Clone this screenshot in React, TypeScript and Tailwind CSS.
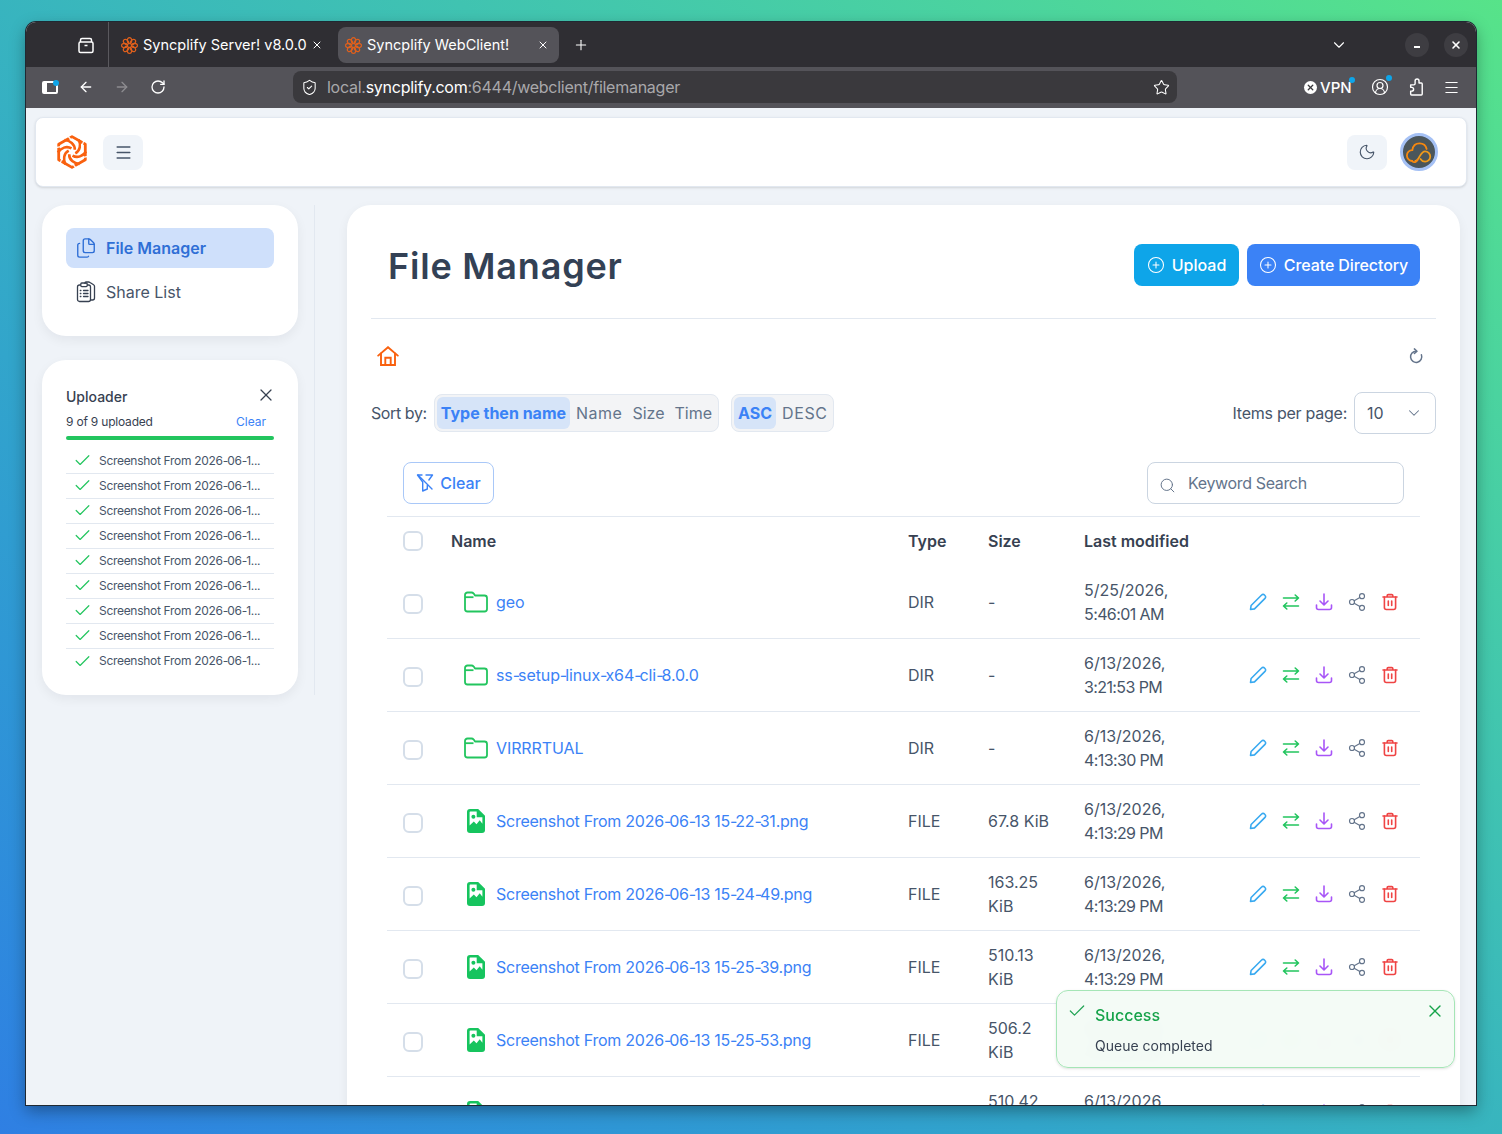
import React from "react";
import { Menu, Moon, X, Plus, ChevronDown, ArrowLeft, ArrowRight, RotateCw, Star, ShieldCheck, Search, Files, Check, Share2, CirclePlus, CircleUserRound } from "lucide-react";

const FONT = "[font-family:Inter,'Liberation_Sans',sans-serif]";

function Logo({ size = 34 }: { size?: number }) {
  return (
    <svg width={size} height={size} viewBox="-17 -17 34 34" fill="none" stroke="#f9610f" strokeLinejoin="round" strokeLinecap="butt">
      <polygon points="0,-15.4 13.3,-7.7 13.3,7.7 0,15.4 -13.3,7.7 -13.3,-7.7" strokeWidth="2.8" />
      {[0, 60, 120, 180, 240, 300].map((r) => (
        <g key={r} transform={`rotate(${r})`}>
          <path d="M-7.5 -12 C-2 -11.5 3 -8 2.8 -2.2" strokeWidth="2.6" />
          <path d="M-4.5 -16.5 L-0.8 -12.2" stroke="#fff" strokeWidth="1.2" />
        </g>
      ))}
    </svg>
  );
}

function Fav() {
  return (
    <svg width="17" height="17" viewBox="-9 -9 18 18" fill="none" stroke="#e0601c" strokeWidth="1.2">
      {[0, 45, 90, 135, 180, 225, 270, 315].map((r) => (
        <ellipse key={r} transform={`rotate(${r}) translate(0 -5.2)`} cx="0" cy="0" rx="2.3" ry="3.2" />
      ))}
    </svg>
  );
}

function Avatar() {
  return (
    <div className="flex h-[38px] w-[38px] items-center justify-center rounded-full bg-[#4b565b] border-[3px] border-[#a5c1f5]">
      <svg width="28" height="23" viewBox="2 1 23 19" fill="none" stroke="#f7880f" strokeWidth="1.5" strokeLinecap="round">
        <path d="M8 17.5a4.5 4.5 0 0 1 0-9c.5-3.5 3-5.5 6-5.5 3 0 5.2 2 5.8 4.6" />
        <path d="M10.5 17.5c3 0 4-8 8-8a4.2 4.2 0 0 1 0 8.6c-1.8 0-3-1-3.8-2.2" stroke="#f09a1a" />
        <path d="M8 17.8c1.5 1.4 3.2.6 4.5-1.3" />
      </svg>
    </div>
  );
}

function Pencil() {
  return (
    <svg width="20" height="20" viewBox="0 0 20 20" fill="none" stroke="#38a9f0" strokeWidth="1.6" strokeLinejoin="round">
      <path d="M2.5 17.5l.6-4L13.6 3a2 2 0 0 1 2.9 0l.5.5a2 2 0 0 1 0 2.9L6.5 16.9z" />
    </svg>
  );
}
function Transfer() {
  return (
    <svg width="20" height="20" viewBox="0 0 20 20" fill="none" stroke="#22c55e" strokeWidth="1.6" strokeLinecap="round" strokeLinejoin="round">
      <path d="M2.5 6h15M14.2 3l3.3 3-3.3 3" />
      <path d="M17.5 14H2.5M5.8 11l-3.3 3 3.3 3" />
    </svg>
  );
}
function Down() {
  return (
    <svg width="20" height="20" viewBox="0 0 20 20" fill="none" stroke="#a855f7" strokeWidth="1.6" strokeLinecap="round" strokeLinejoin="round">
      <path d="M10 2v10.5M6 9l4 4 4-4" />
      <path d="M2.5 13v2.5a2 2 0 0 0 2 2h11a2 2 0 0 0 2-2V13" />
    </svg>
  );
}
function Trash() {
  return (
    <svg width="20" height="20" viewBox="0 0 20 20" fill="none" stroke="#ef4444" strokeWidth="1.6" strokeLinecap="round" strokeLinejoin="round">
      <path d="M3 5h14M7.2 5V3.6c0-.6.4-1 1-1h3.6c.6 0 1 .4 1 1V5" />
      <path d="M4.4 5v10.5a2 2 0 0 0 2 2h7.2a2 2 0 0 0 2-2V5M8.3 9v4.5M11.7 9v4.5" />
    </svg>
  );
}
function FolderI() {
  return (
    <svg width="26" height="22" viewBox="0 0 26 22" fill="none" stroke="#22c55e" strokeWidth="1.8" strokeLinejoin="round" className="ml-[-1px]">
      <path d="M2 6V4a2.5 2.5 0 0 1 2.5-2.5h4c1 0 1.6.4 2.2 1.1L12 4.5h9.5A2.5 2.5 0 0 1 24 7v11a2.5 2.5 0 0 1-2.5 2.5h-17A2.5 2.5 0 0 1 2 18z" />
      <path d="M2 6.2h8.5" />
    </svg>
  );
}
function ImageFile() {
  return (
    <svg width="18" height="24" viewBox="0 0 18 24" className="ml-[3px]">
      <path fill="#16c45e" d="M3 0h8.2L18 6.8V21a3 3 0 0 1-3 3H3a3 3 0 0 1-3-3V3a3 3 0 0 1 3-3z" />
      <path fill="#fff" d="M2.6 3.2c0-.4.3-.7.7-.7h6.4v5.7h5.7v6.6l-2.7-3.6-3.2 4-2.7-2.7-4.2 4z" />
      <circle cx="6.4" cy="7.8" r="2" fill="#16c45e" />
    </svg>
  );
}
function ShareListI() {
  return (
    <svg width="20" height="22" viewBox="0 0 20 22" fill="none" stroke="#374151" strokeWidth="1.3" strokeLinecap="round" strokeLinejoin="round">
      <rect x="1.5" y="4" width="13" height="16.5" rx="2" />
      <rect x="4.8" y="2" width="6.4" height="3.6" rx="1" fill="#fff" />
      <path d="M7.5 9.5h4.5M7.5 12.5h4.5M7.5 15.5h4.5M4.3 9.5h.6M4.3 12.5h.6M4.3 15.5h.6" />
      <path d="M9 2.4V2a1 1 0 0 1 1-1h2.6c.5 0 1 .2 1.4.5l3.6 2.3c.5.3.9.9.9 1.5V17a2 2 0 0 1-2 2h-1.5" />
    </svg>
  );
}
function Puzzle() {
  return (
    <svg width="16" height="18" viewBox="0 0 18 20" fill="none" stroke="#fff" strokeWidth="1.6" strokeLinejoin="round">
      <path d="M8 5.5V3.2a2.2 2.2 0 0 1 4.4 0v2.3H15a1 1 0 0 1 1 1V18a1 1 0 0 1-1 1H4a1 1 0 0 1-1-1v-3.4h1.2a2 2 0 0 0 0-4.2H3V7.6h3.6c.8 0 1.4-.6 1.4-1.4z" />
    </svg>
  );
}
function HomeI() {
  return (
    <svg width="22" height="20" viewBox="0 0 22 20" fill="none" stroke="#f9610f" strokeWidth="1.9" strokeLinejoin="miter" strokeLinecap="round">
      <path d="M1.2 9.6 11 1.2l9.8 8.4" />
      <path d="M4 7.4V19h14V7.4" />
      <path d="M8.3 19v-7.2h5.4V19" />
    </svg>
  );
}
function RefreshI() {
  return (
    <svg width="16" height="16" viewBox="0 0 16 16" fill="none" stroke="#64748b" strokeWidth="1.5" strokeLinecap="round" strokeLinejoin="round">
      <path d="M8.2 3.2a5.6 5.6 0 1 0 5.2 3.6" />
      <path d="M6.4.9l2.6 2.3-2.6 2.3" />
    </svg>
  );
}
function FilterI() {
  return (
    <svg width="18" height="20" viewBox="0 0 18 20" fill="none" stroke="#3b82f6" strokeWidth="1.4" strokeLinecap="round" strokeLinejoin="round">
      <path d="M6 2H1.5l5.2 7v9l4.6-2v-3.5" />
      <path d="M10 2h6.5l-3.6 5M2 2l14 14" />
    </svg>
  );
}

function Hy({ text, sp = "tracking-[-2px]" }: { text: string; sp?: string }) {
  const parts = text.split("-");
  return (
    <>
      {parts.map((p, i) => (
        <React.Fragment key={i}>
          {p}
          {i < parts.length - 1 ? <span className={sp}>-</span> : null}
        </React.Fragment>
      ))}
    </>
  );
}

type Row = { name: string; dir?: boolean; type: string; size: string[]; date: string; time: string };
const rows: Row[] = [
  { name: "geo", dir: true, type: "DIR", size: ["-"], date: "5/25/2026,", time: "5:46:01 AM" },
  { name: "ss-setup-linux-x64-cli-8.0.0", dir: true, type: "DIR", size: ["-"], date: "6/13/2026,", time: "3:21:53 PM" },
  { name: "VIRRRTUAL", dir: true, type: "DIR", size: ["-"], date: "6/13/2026,", time: "4:13:30 PM" },
  { name: "Screenshot From 2026-06-13 15-22-31.png", type: "FILE", size: ["67.8 KiB"], date: "6/13/2026,", time: "4:13:29 PM" },
  { name: "Screenshot From 2026-06-13 15-24-49.png", type: "FILE", size: ["163.25", "KiB"], date: "6/13/2026,", time: "4:13:29 PM" },
  { name: "Screenshot From 2026-06-13 15-25-39.png", type: "FILE", size: ["510.13", "KiB"], date: "6/13/2026,", time: "4:13:29 PM" },
  { name: "Screenshot From 2026-06-13 15-25-53.png", type: "FILE", size: ["506.2", "KiB"], date: "6/13/2026,", time: "4:13:29 PM" },
  { name: "Screenshot From 2026-06-13 15-26-07.png", type: "FILE", size: ["510.42", "KiB"], date: "6/13/2026,", time: "4:13:29 PM" },
];

function TableRow({ r }: { r: Row }) {
  return (
    <div className="flex h-[73px] items-center border-b border-[#e2e8f0] text-base leading-6 text-[#475569]">
      <div className="w-[64px] shrink-0 pl-[16px] pt-[4px]">
        <div className="h-[20px] w-[20px] rounded-md border-2 border-[#d5dee9]" />
      </div>
      <div className="flex w-[457px] shrink-0 items-center pl-[13px]">
        <div className="w-[32px] shrink-0">{r.dir ? <FolderI /> : <ImageFile />}</div>
        <span className={`text-[#3b82f6] ${r.dir ? "tracking-[-0.1px]" : "tracking-[-0.25px]"}`}>
          <Hy text={r.name} />
        </span>
      </div>
      <div className="w-[80px] shrink-0">{r.type}</div>
      <div className="w-[96px] shrink-0">
        {r.size.map((s) => (
          <div key={s}>{s}</div>
        ))}
      </div>
      <div className="w-[157px] shrink-0">
        <div>{r.date}</div>
        <div className="tracking-[-0.6px]">{r.time}</div>
      </div>
      <div className="flex items-center">
        <span className="flex w-[33px] justify-center"><Pencil /></span>
        <span className="flex w-[33px] justify-center"><Transfer /></span>
        <span className="flex w-[33px] justify-center"><Down /></span>
        <span className="flex w-[33px] justify-center"><Share2 size={20} strokeWidth={1.4} className="text-[#64748b]" /></span>
        <span className="flex w-[33px] justify-center"><Trash /></span>
      </div>
    </div>
  );
}

function BlueDot() {
  return <span className="absolute right-[-3px] top-[-3px] h-[6px] w-[6px] rounded-full bg-[#0ea5e9]" />;
}

export default function App() {
  return (
    <div className={`h-[1134px] w-full overflow-hidden bg-linear-to-tr from-[#2f7fe3] to-[#57e389] pl-[26px] pt-[22px] ${FONT}`}>
      <div className="relative flex h-[1083px] w-[1450px] flex-col overflow-hidden rounded-t-[10px] bg-[#eff3f8] shadow-[0_0_0_1px_#1f2933,0_6px_16px_rgba(0,0,0,0.35)]">
        {/* title bar */}
        <div className="flex h-[45px] shrink-0 items-center bg-[#2f2e33] text-white">
          <div className="flex h-full w-[83px] items-center justify-end border-r border-[#5a595e] pr-[13px]">
            <svg width="18" height="18" viewBox="0 0 18 18" fill="none" stroke="#fff" strokeWidth="1.5" strokeLinejoin="round">
              <rect x="2" y="6" width="14" height="10.5" rx="1.5" />
              <path d="M3.5 6V4a1.5 1.5 0 0 1 1.5-1.5h8A1.5 1.5 0 0 1 14.5 4v2M7.5 9.5h3" />
            </svg>
          </div>
          <div className="ml-[12px] flex w-[205px] items-center pt-[1px]">
            <Fav />
            <span className="ml-[5px] whitespace-nowrap text-[14.5px]">Syncplify Server! v8.0.0</span>
            <X size={12} className="ml-[4px]" />
          </div>
          <div className="ml-[12px] flex h-[36px] w-[221px] items-center rounded-lg bg-[#545359] pl-[7px] pt-[1px]">
            <Fav />
            <span className="ml-[5px] whitespace-nowrap text-[14.5px]">Syncplify WebClient!</span>
            <X size={12} className="ml-auto mr-[10px]" />
          </div>
          <Plus size={16} className="ml-[14px]" strokeWidth={1.6} />
          <ChevronDown size={18} strokeWidth={1.5} className="ml-[741px]" />
          <span className="ml-[57px] flex h-[24px] w-[24px] items-center justify-center rounded-full bg-[#3e3d42] pt-[5px] text-[13px] font-bold leading-none">
            <span className="h-[2px] w-[6px] bg-white" />
          </span>
          <span className="ml-[15px] flex h-[24px] w-[24px] items-center justify-center rounded-full bg-[#3e3d42]">
            <X size={12} strokeWidth={3.2} />
          </span>
        </div>
        {/* toolbar */}
        <div className="flex h-[41px] shrink-0 items-center bg-[#545359] pb-[1px] text-white">
          <div className="relative ml-[16px] h-[13px] w-[16px] rounded-[2px] border-2 border-l-[5px] border-white">
            <BlueDot />
          </div>
          <ArrowLeft size={16} className="ml-[20px]" />
          <ArrowRight size={16} className="ml-[20px] text-[#8d8c90]" />
          <RotateCw size={16} className="ml-[20px]" />
          <div className="ml-[127px] flex h-[32px] w-[884px] items-center rounded-lg bg-[#3a393d] pl-[8px] pr-[7px]">
            <ShieldCheck size={17} strokeWidth={1.5} />
            <span className="ml-[9px] text-base tracking-[-0.26px] text-[#a9a8ab]">
              local.<span className="text-white">syncplify.com</span>:6444/webclient/filemanager
            </span>
            <Star size={17} strokeWidth={1.5} className="ml-auto" />
          </div>
          <span className="relative ml-[127px] flex items-center">
            <span className="flex h-[13px] w-[13px] items-center justify-center rounded-full bg-white">
              <X size={9} strokeWidth={3.5} className="text-[#3a393d]" />
            </span>
            <span className="relative ml-[3px] text-[15px] font-medium leading-none">
              VPN
              <BlueDot />
            </span>
          </span>
          <span className="relative ml-[19px]">
            <CircleUserRound size={18} strokeWidth={1.6} />
            <BlueDot />
          </span>
          <span className="ml-[19px]"><Puzzle /></span>
          <Menu size={17} strokeWidth={1.5} className="ml-[19px]" />
        </div>
        {/* page */}
        <div className="flex min-h-0 flex-1 flex-col text-[#374151]">
          <div className="mx-[9px] mt-[9px] flex h-[70px] shrink-0 items-center rounded-lg border border-[#e2e8f0] bg-white pl-[19px] pr-[28px] shadow-sm">
            <Logo />
            <span className="ml-[14px] flex h-[35px] w-[40px] items-center justify-center rounded-lg bg-[#f0f4f9]">
              <Menu size={19} strokeWidth={1.9} className="text-[#475569]" />
            </span>
            <span className="ml-auto flex h-[35px] w-[40px] items-center justify-center rounded-lg bg-[#f0f4f9]">
              <Moon size={18} strokeWidth={1.5} className="text-[#475569]" />
            </span>
            <span className="ml-[13px]"><Avatar /></span>
          </div>
          <div className="mt-[18px] flex min-h-0 flex-1 pl-[16px] pr-[16px]">
            {/* sidebar */}
            <div className="flex h-[490px] w-[273px] shrink-0 flex-col gap-[24px] border-r border-[#e2e8f0] pr-[16px]">
              <div className="h-[131px] rounded-3xl bg-white px-[24px] pt-[23px] shadow-[0_4px_12px_rgba(15,23,42,0.06)]">
                <div className="flex h-[40px] items-center rounded-lg bg-[#cfe0fb] pl-[9px] text-base font-semibold text-[#2f6fd6]">
                  <Files size={22} strokeWidth={1.5} />
                  <span className="ml-[9px]">File Manager</span>
                </div>
                <div className="mt-[4px] flex h-[40px] items-center pl-[10px] text-base text-[#475569]">
                  <ShareListI />
                  <span className="ml-[10px]">Share List</span>
                </div>
              </div>
              <div className="h-[336px] rounded-3xl bg-white px-[24px] pt-[24px] shadow-[0_4px_12px_rgba(15,23,42,0.06)]">
                <div className="flex h-[26px] items-center justify-between">
                  <span className="text-sm font-medium text-[#374151]">Uploader</span>
                  <X size={20} strokeWidth={1.5} className="mr-[-2px] mt-[-4px] text-[#374151]" />
                </div>
                <div className="flex h-[24px] items-center justify-between pr-[8px] pt-[1px] text-xs">
                  <span className="tracking-[-0.2px] text-[#374151]">9 of 9 uploaded</span>
                  <span className="text-[#3b82f6]">Clear</span>
                </div>
                <div className="mt-[2px] h-[4px] rounded-full bg-[#22c55e]" />
                <div className="mt-[9px]">
                  {Array.from({ length: 9 }).map((_, i) => (
                    <div key={i} className={`flex h-[25px] items-center pl-[7px] ${i < 8 ? "border-b border-[#e2e8f0]" : ""}`}>
                      <Check size={19} strokeWidth={1.5} className="text-[#22c55e]" />
                      <span className="ml-[7px] whitespace-nowrap text-xs tracking-[-0.3px] text-[#475569]">
                        <Hy text="Screenshot From 2026-06-1..." sp="tracking-[-1px]" />
                      </span>
                    </div>
                  ))}
                </div>
              </div>
            </div>
            {/* main */}
            <div className="ml-[32px] h-[1200px] flex-1 rounded-t-3xl bg-white px-[24px] pt-[39px] shadow-[0_4px_12px_rgba(15,23,42,0.06)]">
              <div className="flex h-[75px] items-start justify-between border-b border-[#e2e8f0] pl-[17px] pr-[16px]">
                <h1 className="text-[36px] font-semibold leading-[44px] tracking-[0.8px] text-[#334155]">File Manager</h1>
                <div className="flex gap-[8px]">
                  <span className="flex h-[42px] w-[105px] items-center justify-center gap-[7px] rounded-lg bg-[#0ea5e9] text-base font-medium text-white">
                    <CirclePlus size={18} strokeWidth={1.4} /> Upload
                  </span>
                  <span className="flex h-[42px] w-[173px] items-center justify-center gap-[7px] rounded-lg bg-[#3b82f6] text-base font-medium tracking-[-0.1px] text-white">
                    <CirclePlus size={18} strokeWidth={1.4} /> Create Directory
                  </span>
                </div>
              </div>
              <div className="flex h-[73px] items-center justify-between pl-[6px] pr-[12px]">
                <HomeI />
                <RefreshI />
              </div>
              <div className="flex items-center">
                <span className="text-base tracking-[-0.4px] text-[#475569]">Sort by:</span>
                <div className="ml-[7px] flex h-[38px] items-center rounded-lg border border-[#e2e8f0] bg-[#f3f4f6] px-[2px] text-base text-[#64748b]">
                  <span className="flex h-[32px] items-center rounded-md bg-[#d6e4f8] px-[4px] font-bold text-[#3b82f6]">Type then name</span>
                  <span className="pl-[6px] pr-[5px] tracking-[0.5px]">Name</span>
                  <span className="px-[5px]">Size</span>
                  <span className="pl-[5px] pr-[4px]">Time</span>
                </div>
                <div className="ml-[12px] flex h-[38px] items-center rounded-lg border border-[#e2e8f0] bg-[#f3f4f6] px-[2px] text-base text-[#64748b]">
                  <span className="flex h-[32px] items-center rounded-md bg-[#d6e4f8] px-[4px] font-bold text-[#3b82f6]">ASC</span>
                  <span className="pl-[6px] pr-[3px] tracking-[0.6px]">DESC</span>
                </div>
                <span className="ml-auto text-base tracking-[-0.25px] text-[#475569]">Items per page:</span>
                <div className="ml-[7px] flex h-[42px] w-[82px] items-center justify-between rounded-lg border border-[#cbd5e1] pl-[12px] pr-[12px] text-base text-[#475569]">
                  10
                  <ChevronDown size={18} strokeWidth={1.4} className="text-[#64748b]" />
                </div>
              </div>
              <div className="mx-[16px] mt-[28px]">
                <div className="flex h-[55px] items-start justify-between border-b border-[#e2e8f0] px-[16px]">
                  <span className="flex h-[42px] w-[91px] items-center justify-center gap-[6px] rounded-lg border border-[#a9c8f8] text-base font-medium text-[#3b82f6]">
                    <FilterI /> Clear
                  </span>
                  <div className="flex h-[42px] w-[257px] items-center rounded-lg border border-[#cbd5e1] pl-[11px] text-base text-[#64748b]">
                    <Search size={17} strokeWidth={1.4} className="mt-[5px]" />
                    <span className="ml-[12px] tracking-[-0.35px]">Keyword Search</span>
                  </div>
                </div>
                <div className="flex h-[49px] items-center pb-[2px] text-base font-semibold text-[#374151]">
                  <div className="w-[64px] shrink-0 pl-[16px]">
                    <div className="h-[20px] w-[20px] rounded-md border-2 border-[#d5dee9]" />
                  </div>
                  <div className="w-[457px] shrink-0">Name</div>
                  <div className="w-[80px] shrink-0">Type</div>
                  <div className="w-[96px] shrink-0">Size</div>
                  <div>Last modified</div>
                </div>
                {rows.map((r) => (
                  <TableRow key={r.name} r={r} />
                ))}
              </div>
            </div>
          </div>
        </div>
        {/* toast */}
        <div className="absolute bottom-[37px] right-[21px] h-[78px] w-[399px] rounded-xl border border-[#a5e5b6] bg-[#f3fbf6]/95 pl-[10px] pr-[9px] pt-[10px] shadow-sm backdrop-blur-sm">
          <div className="flex items-start">
            <Check size={20} strokeWidth={1.5} className="text-[#22a455]" />
            <span className="ml-[8px] mt-[2px] text-base font-medium text-[#16a34a]">Success</span>
            <X size={20} strokeWidth={1.6} className="ml-auto text-[#16a34a]" />
          </div>
          <div className="ml-[28px] mt-[9px] text-sm text-[#374151]">Queue completed</div>
        </div>
      </div>
    </div>
  );
}
